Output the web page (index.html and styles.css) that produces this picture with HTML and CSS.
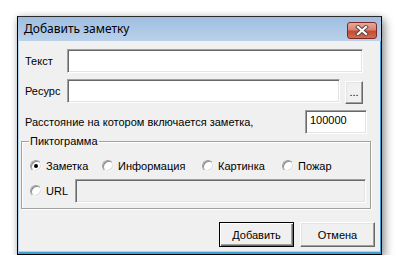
FILE: index.html
```html
<!DOCTYPE html>
<html lang="ru">

<head>
    <meta charset="UTF-8">
    <meta name="viewport" content="width=device-width, initial-scale=1.0">
    <link rel="stylesheet" href="styles.css">
</head>

<body>
    <div class="window">
        <div class="titlebar">
            <span class="title">Добавить заметку</span>
            <div class="close">
                <svg width="14" height="11" viewBox="0 0 14 11">
                    <path d="M3 2 L11 9 M11 2 L3 9" stroke="#5a4040" stroke-width="4" stroke-linecap="square"></path>
                    <path d="M3 2 L11 9 M11 2 L3 9" stroke="#ffffff" stroke-width="2.2" stroke-linecap="square"></path>
                </svg>
            </div>
        </div>
        <div class="client">
            <div class="row row-text">
                <span class="label">Текст</span>
                <div class="field field-text"></div>
            </div>
            <div class="row row-res">
                <span class="label">Ресурс</span>
                <div class="field field-res"></div>
                <div class="btn btn-dots">...</div>
            </div>
            <div class="row row-dist">
                <span class="label-long">Расстояние на котором включается заметка,</span>
                <div class="field field-dist">100000</div>
            </div>
            <div class="group">
                <span class="legend">Пиктограмма</span>
                <div class="radios">
                    <div class="radio r-note"><span class="dot checked"></span>Заметка</div>
                    <div class="radio r-info"><span class="dot"></span>Информация</div>
                    <div class="radio r-pic"><span class="dot"></span>Картинка</div>
                    <div class="radio r-fire"><span class="dot"></span>Пожар</div>
                </div>
                <div class="url-row">
                    <div class="radio r-url"><span class="dot"></span>URL</div>
                    <div class="field field-url"></div>
                </div>
            </div>
            <div class="buttons">
                <div class="btn btn-main default">Добавить</div>
                <div class="btn btn-main">Отмена</div>
            </div>
        </div>
    </div>
</body>

</html>
```

FILE: styles.css
```css
body {
    margin: 0;
    background: #ffffff;
    font-family: "Liberation Sans", Arial, sans-serif;
    font-size: 11px;
    color: #000000;
}

.window {
    box-sizing: border-box;
    width: 365px;
    height: 239px;
    margin: 16px 0 0 17px;
    border: 1px solid #000000;
    border-top-color: #2a2a2a;
    background: #f0f0f0;
    display: flex;
    flex-direction: column;
    box-shadow: 3px 4px 9px rgba(0, 0, 0, 0.4), 0 0 6px rgba(0, 0, 0, 0.15);
}

.titlebar {
    height: 24px;
    display: flex;
    align-items: center;
    justify-content: space-between;
    background: linear-gradient(#9fbde0, #bad2ea);
    padding: 0 4px 0 6px;
}

.title {
    font-family: "Noto Sans", "Open Sans", sans-serif;
    font-size: 12px;
    margin-top: -2px;
}

.close {
    box-sizing: border-box;
    width: 30px;
    height: 17px;
    margin-top: 2px;
    border: 1px solid #7d2a22;
    border-radius: 3px;
    background: linear-gradient(#e4a99c 0%, #d88470 45%, #c24b31 55%, #d06d55 100%);
    display: flex;
    align-items: center;
    justify-content: center;
}

.client {
    flex: 1;
    border-left: 1px solid #b4d3ef;
    border-right: 1px solid #3aa2d9;
    border-bottom: 2px solid #3aa2d9;
    box-shadow: inset 0 -1px #a9d2ee;
    padding-top: 8px;
}

.row {
    display: flex;
    align-items: center;
    height: 24px;
}

.label {
    width: 42px;
    padding-left: 6px;
}

.label-long {
    width: 280px;
    padding-left: 6px;
}

.field {
    box-sizing: border-box;
    height: 24px;
    background: #ffffff;
    border: 1px solid;
    border-color: #a0a0a0 #ffffff #ffffff #a0a0a0;
    box-shadow: inset 1px 1px #696969, inset -1px -1px #e3e3e3;
}

.field-text {
    width: 296px;
}

.row-res {
    margin-top: 6px;
    align-items: flex-start;
}

.row-res .label {
    align-self: center;
}

.field-res {
    width: 273px;
}

.btn {
    box-sizing: border-box;
    background: #f0f0f0;
    border: 1px solid;
    border-color: #ffffff #696969 #696969 #ffffff;
    box-shadow: inset -1px -1px #a0a0a0, inset 1px 1px #e3e3e3;
    display: flex;
    align-items: center;
    justify-content: center;
}

.btn-dots {
    width: 18px;
    height: 23px;
    margin: 2px 0 0 5px;
    padding-bottom: 2px;
}

.row-dist {
    margin-top: 7px;
}

.field-dist {
    width: 62px;
    padding: 3px 0 0 4px;
}

.group {
    position: relative;
    box-sizing: border-box;
    width: 350px;
    height: 68px;
    margin: 7px 0 0 2px;
    border: 1px solid #a0a0a0;
    box-shadow: inset 1px 1px #ffffff, 1px 1px #ffffff;
    padding: 16px 0 0 8px;
}

.legend {
    position: absolute;
    top: -7px;
    left: 7px;
    padding: 0 1px;
    background: #f0f0f0;
}

.radios {
    display: flex;
    height: 16px;
    align-items: center;
}

.radio {
    display: flex;
    align-items: center;
    gap: 4px;
}

.r-note {
    width: 72px;
}

.r-info {
    width: 100px;
}

.r-pic {
    width: 80px;
}

.dot {
    box-sizing: border-box;
    width: 12px;
    height: 12px;
    border-radius: 50%;
    background: #ffffff;
    border: 1px solid;
    border-color: #a0a0a0 #f4f4f4 #f4f4f4 #a0a0a0;
    box-shadow: inset 1px 1px #8a8a8a, inset -1px -1px #dcdcdc;
    display: flex;
    align-items: center;
    justify-content: center;
}

.dot.checked::after {
    content: "";
    width: 4px;
    height: 4px;
    border-radius: 50%;
    background: #000000;
}

.url-row {
    display: flex;
    align-items: center;
    margin-top: 5px;
}

.r-url {
    width: 45px;
}

.field-url {
    width: 291px;
    background: #f0f0f0;
}

.buttons {
    display: flex;
    justify-content: flex-end;
    gap: 6px;
    margin: 13px 5px 0 0;
}

.btn-main {
    width: 75px;
    height: 25px;
}

.btn-main.default {
    border: 1px solid #000000;
    box-shadow: inset 1px 1px #ffffff, inset -1px -1px #696969, inset -2px -2px #a0a0a0;
}
```
